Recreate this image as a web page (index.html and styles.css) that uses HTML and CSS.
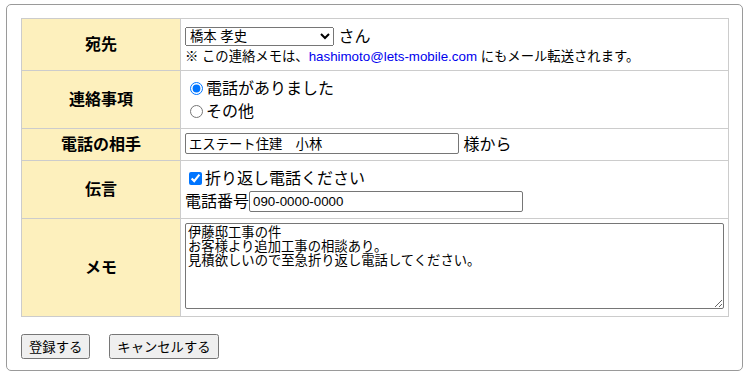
FILE: index.html
```html
<!DOCTYPE html>
<html lang="ja">
<head>
    <meta charset="UTF-8">
    <meta name="viewport" content="width=device-width, initial-scale=1.0">
    <title>連絡メモ</title>
    <link rel="stylesheet" href="styles.css">
</head>
<body>
    <div class="panel">
        <form class="memo-form" onsubmit="return false;">
            <table class="memo">
                <tr class="row-to">
                    <th>宛先</th>
                    <td>
                        <div class="line"><select class="to"><option>橋本 孝史</option><option>山田 太郎</option></select> さん</div>
                        <div class="note">※ この連絡メモは、<a href="#">hashimoto@lets-mobile.com</a> にもメール転送されます。</div>
                    </td>
                </tr>
                <tr class="row-kind">
                    <th>連絡事項</th>
                    <td>
                        <label class="opt"><input type="radio" name="kind" checked>電話がありました</label>
                        <label class="opt"><input type="radio" name="kind">その他</label>
                    </td>
                </tr>
                <tr class="row-caller">
                    <th>電話の相手</th>
                    <td><input type="text" class="field" value="エステート住建　小林"> 様から</td>
                </tr>
                <tr class="row-message">
                    <th>伝言</th>
                    <td>
                        <label class="opt"><input type="checkbox" checked>折り返し電話ください</label>
                        <div class="line">電話番号<input type="text" class="field" value="090-0000-0000"></div>
                    </td>
                </tr>
                <tr class="row-memo">
                    <th>メモ</th>
                    <td><textarea class="memo-text">伊藤邸工事の件
お客様より追加工事の相談あり。
見積欲しいので至急折り返し電話してください。</textarea></td>
                </tr>
            </table>
            <div class="actions">
                <button type="submit">登録する</button>
                <button type="button">キャンセルする</button>
            </div>
        </form>
    </div>
</body>
</html>
```

FILE: styles.css
```css
html, body {
    margin: 0;
    font-family: 'Liberation Sans', 'Noto Sans CJK JP', sans-serif;
    font-size: 16px;
    color: #000;
    background: #fff;
}
body {
    padding: 4px 7px 6px 6px;
}
.panel {
    border: 1px solid #9a9a9a;
    border-radius: 5px;
    padding: 13px 13px 11px 14px;
}
.memo {
    width: 708px;
    border-collapse: collapse;
}
.memo th,
.memo td {
    box-sizing: border-box;
    border: 1px solid #cccccc;
    padding: 4px;
    vertical-align: middle;
    line-height: 23px;
}
.memo th {
    width: 159px;
    background: #fdf0bd;
    font-weight: bold;
    text-align: center;
}
.row-to th, .row-to td { height: 52px; }
.row-kind th, .row-kind td { height: 58px; }
.row-caller th, .row-caller td { height: 32px; }
.row-message th, .row-message td { height: 58px; }
.row-memo th, .row-memo td { height: 98px; }
.row-memo td {
    vertical-align: top;
}
.line {
    line-height: 23px;
}
.note {
    font-size: 13.333px;
    line-height: 17px;
}
.note a {
    color: #0000ee;
    text-decoration: none;
}
.opt {
    display: block;
}
.opt input {
    vertical-align: -1px;
}
select.to {
    box-sizing: border-box;
    width: 149px;
    height: 19px;
    font-family: inherit;
    font-size: 13.333px;
    vertical-align: 1px;
}
.field {
    box-sizing: border-box;
    width: 274px;
    height: 21px;
    padding: 0 3px;
    border: 1px solid #767676;
    border-radius: 2px;
    font-family: inherit;
    font-size: 13.333px;
    vertical-align: 1px;
}
.memo-text {
    display: block;
    box-sizing: border-box;
    width: 539px;
    height: 86px;
    padding: 2px;
    border: 1px solid #767676;
    border-radius: 2px;
    font-family: inherit;
    font-size: 13.333px;
    line-height: 14px;
}
.actions {
    display: flex;
    gap: 19px;
    margin-top: 17px;
}
.actions button {
    height: 25px;
    padding: 0 6px;
    font-family: inherit;
    font-size: 13.333px;
}
```
